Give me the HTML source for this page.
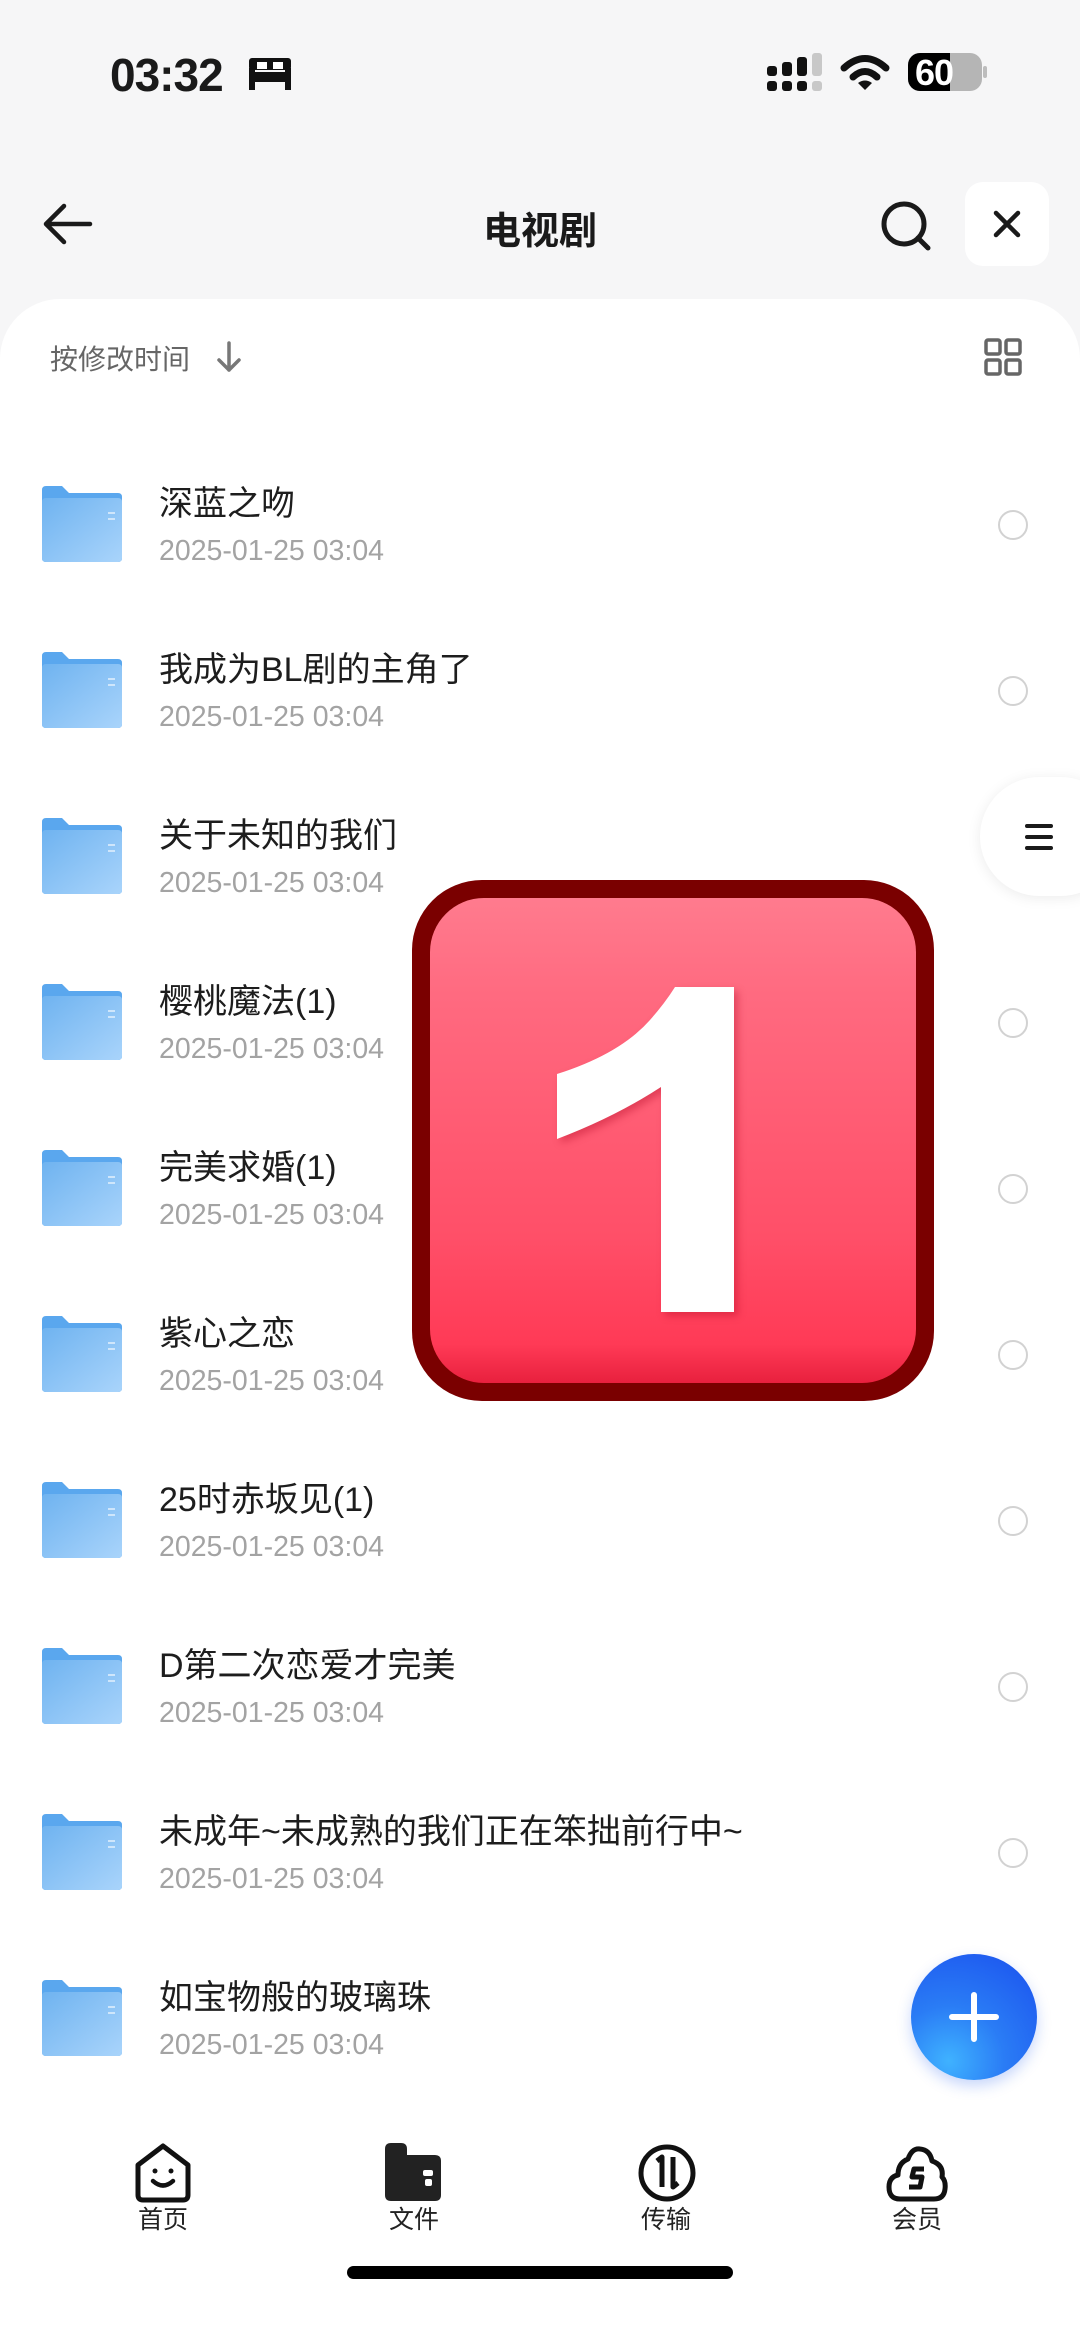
<!DOCTYPE html>
<html><head><meta charset="utf-8">
<style>
*{margin:0;padding:0;box-sizing:border-box}
body{width:1080px;height:2341px;background:#f6f6f7;font-family:"Liberation Sans","Noto Sans CJK SC",sans-serif;position:relative;overflow:hidden;color:#1a1a1a}
.abs{position:absolute}
.card{position:absolute;left:0;top:299px;width:1080px;height:2042px;background:#fff;border-radius:60px 60px 0 0}
.row{position:absolute;left:0;width:1080px;height:166px}
.fold{position:absolute;left:42px;width:80px;height:76px}
.t{position:absolute;left:159px;font-size:34px;color:#1d1d1d;white-space:nowrap}
.d{position:absolute;left:159px;font-size:28.5px;color:#a3a3a3;white-space:nowrap}
.r{position:absolute;left:998px;width:30px;height:30px;border:2.5px solid #d2d2d2;border-radius:50%}
.nav{position:absolute;top:2200px;font-size:25px;color:#222;width:100px;text-align:center}
</style></head><body>
<div class="abs" style="left:110px;top:48px;font-size:46px;font-weight:bold;letter-spacing:-1px">03:32</div>
<svg class="abs" style="left:247px;top:58px" width="46" height="32" viewBox="0 0 46 32"><rect x="2" y="0" width="42" height="12" rx="3" fill="#111"/><rect x="2" y="14" width="42" height="10" fill="#111"/><rect x="2" y="10" width="6" height="22" fill="#111"/><rect x="38" y="10" width="6" height="22" fill="#111"/><rect x="10" y="4" width="10" height="7" fill="#fff"/><rect x="26" y="4" width="10" height="7" fill="#fff"/></svg>
<svg class="abs" style="left:767px;top:53px" width="56" height="40" viewBox="0 0 56 40"><g fill="#111"><rect x="0" y="13" width="10" height="10" rx="3"/><rect x="0" y="28" width="10" height="10" rx="3"/><rect x="15" y="9" width="10" height="14" rx="3"/><rect x="15" y="28" width="10" height="10" rx="3"/><rect x="30" y="4" width="10" height="19" rx="3"/><rect x="30" y="28" width="10" height="10" rx="3"/></g><rect x="45" y="0" width="10" height="23" rx="3" fill="#c8c8c8"/><rect x="45" y="28" width="10" height="10" rx="3" fill="#c8c8c8"/></svg>
<svg class="abs" style="left:840px;top:55px" width="50" height="36" viewBox="0 0 50 36"><path d="M4 13 Q25 -6 46 13" stroke="#111" stroke-width="7" fill="none" stroke-linecap="round"/><path d="M13 22 Q25 11 37 22" stroke="#111" stroke-width="7" fill="none" stroke-linecap="round"/><path d="M18 28 L25 35 L32 28 Q25 23 18 28Z" fill="#111"/></svg>
<div class="abs" style="left:908px;top:53px;width:74px;height:38px;border-radius:12px;background:#b5b5b5;overflow:hidden"><div style="width:42px;height:38px;background:#000"></div></div>
<div class="abs" style="left:983px;top:66px;width:4px;height:12px;border-radius:2px;background:#bdbdbd"></div>
<div class="abs" style="left:915px;top:52px;font-size:36px;font-weight:bold;color:#fff;letter-spacing:-1px">60</div>

<svg class="abs" style="left:42px;top:202px" width="52" height="44" viewBox="0 0 52 44"><path d="M48 22 H6 M22 4 L4 22 L22 40" stroke="#1a1a1a" stroke-width="4.5" fill="none" stroke-linecap="round" stroke-linejoin="round"/></svg>
<div class="abs" style="left:0;width:1080px;top:200px;text-align:center;font-size:38px;font-weight:bold">电视剧</div>
<svg class="abs" style="left:878px;top:198px" width="56" height="56" viewBox="0 0 56 56"><circle cx="26" cy="26" r="20" stroke="#1a1a1a" stroke-width="5" fill="none"/><path d="M40 40 L50 50" stroke="#1a1a1a" stroke-width="5" stroke-linecap="round"/></svg>
<div class="abs" style="left:965px;top:182px;width:84px;height:84px;background:#fff;border-radius:18px"></div>
<svg class="abs" style="left:992px;top:209px" width="30" height="30" viewBox="0 0 30 30"><path d="M4 4 L26 26 M26 4 L4 26" stroke="#1a1a1a" stroke-width="4.5" stroke-linecap="round"/></svg>

<div class="card"></div>
<div class="abs" style="left:50px;top:338px;font-size:28px;color:#666">按修改时间</div>
<svg class="abs" style="left:216px;top:340px" width="26" height="34" viewBox="0 0 26 34"><path d="M13 3 V30 M3 20 L13 30 L23 20" stroke="#777" stroke-width="3.5" fill="none" stroke-linecap="round" stroke-linejoin="round"/></svg>
<svg class="abs" style="left:984px;top:338px" width="38" height="38" viewBox="0 0 38 38"><g stroke="#666" stroke-width="3.5" fill="none"><rect x="2" y="2" width="14" height="14" rx="2"/><rect x="22" y="2" width="14" height="14" rx="2"/><rect x="2" y="22" width="14" height="14" rx="2"/><rect x="22" y="22" width="14" height="14" rx="2"/></g></svg>

<div id="rows"></div>
<script>
var items=["深蓝之吻","我成为BL剧的主角了","关于未知的我们","樱桃魔法(1)","完美求婚(1)","紫心之恋","25时赤坂见(1)","D第二次恋爱才完美","未成年~未成熟的我们正在笨拙前行中~","如宝物般的玻璃珠"];
var h="";
for(var i=0;i<items.length;i++){var y=470+i*166;
h+='<div class="row" style="top:'+y+'px">'+
'<svg class="fold" style="top:16px" viewBox="0 0 80 76"><defs><linearGradient id="g'+i+'" x1="0" y1="0" x2="1" y2="1"><stop offset="0" stop-color="#6fb3f0"/><stop offset="1" stop-color="#a9d4fb"/></linearGradient></defs><path d="M0 4 Q0 0 4 0 H20 L27 7 H76 Q80 7 80 11 V72 Q80 76 76 76 H4 Q0 76 0 72Z" fill="#5aa7ee"/><path d="M0 16 Q0 12 4 12 H76 Q80 12 80 16 V72 Q80 76 76 76 H4 Q0 76 0 72Z" fill="url(#g'+i+')"/><rect x="66" y="26" width="7" height="2" fill="#cfe6fb"/><rect x="66" y="32" width="7" height="2" fill="#cfe6fb"/></svg>'+
'<div class="t" style="top:6px">'+items[i]+'</div>'+
'<div class="d" style="top:65px">2025-01-25 03:04</div>'+
(i<9?'<div class="r" style="top:40px"></div>':'')+'</div>';}
document.getElementById("rows").innerHTML=h;
</script>

<div class="abs" style="left:980px;top:777px;width:140px;height:119px;background:#fff;border-radius:60px;box-shadow:0 2px 14px rgba(0,0,0,0.08)"></div>
<svg class="abs" style="left:1024px;top:822px" width="30" height="30" viewBox="0 0 30 30"><g stroke="#1a1a1a" stroke-width="4" stroke-linecap="round"><path d="M3 4 H27 M3 15 H27 M3 26 H27"/></g></svg>

<div class="abs" style="left:412px;top:880px;width:522px;height:521px;border-radius:70px;background:#7a0000;padding:18px">
<div style="width:100%;height:100%;border-radius:54px;background:linear-gradient(#ff7b8e 0%,#ff6a80 20%,#ff4f68 70%,#ff3a56 92%,#e8203e 100%)"></div></div>
<svg class="abs" style="left:412px;top:880px" width="522" height="521" viewBox="412 880 522 521"><path d="M557 1074 Q620 1054 650 1020 Q665 1003 675 987 H734 V1312 H661 V1087 Q615 1117 557 1139 Z" fill="#fff" style="filter:drop-shadow(4px 4px 4px rgba(170,0,30,0.35))"/></svg>

<div class="abs" style="left:911px;top:1954px;width:126px;height:126px;border-radius:50%;background:radial-gradient(circle at 30% 85%,#3fb2ff 0%,#2a7cf5 40%,#1a4fee 100%);box-shadow:0 6px 14px rgba(30,90,240,0.25)"></div>
<svg class="abs" style="left:948px;top:1991px" width="52" height="52" viewBox="0 0 52 52"><path d="M26 4 V48 M4 26 H48" stroke="#fff" stroke-width="6" stroke-linecap="round"/></svg>

<svg class="abs" style="left:134px;top:2143px" width="58" height="60" viewBox="0 0 58 60"><path d="M4 22 L29 3 L54 22 V52 Q54 57 49 57 H9 Q4 57 4 52Z" stroke="#111" stroke-width="5" fill="none" stroke-linejoin="round"/><circle cx="21" cy="28" r="2.5" fill="#111"/><circle cx="37" cy="28" r="2.5" fill="#111"/><path d="M19 38 Q29 47 39 38" stroke="#111" stroke-width="4.5" fill="none" stroke-linecap="round"/></svg>
<svg class="abs" style="left:385px;top:2143px" width="58" height="60" viewBox="0 0 58 60"><path d="M0 6 Q0 0 6 0 H16 Q22 0 22 6 V12 H50 Q56 12 56 18 V52 Q56 58 50 58 H6 Q0 58 0 52Z" fill="#222"/><rect x="38" y="27" width="10" height="6" rx="2" fill="#fff"/><rect x="40" y="36" width="7" height="7" rx="2" fill="#fff"/></svg>
<svg class="abs" style="left:637px;top:2143px" width="60" height="60" viewBox="0 0 60 60"><circle cx="30" cy="30" r="26" stroke="#111" stroke-width="5" fill="none"/><path d="M20 18 L25 14 V44" stroke="#111" stroke-width="5" fill="none" stroke-linejoin="round"/><path d="M36 14 V44 L41 40" stroke="#111" stroke-width="5" fill="none" stroke-linejoin="round"/></svg>
<svg class="abs" style="left:886px;top:2145px" width="62" height="58" viewBox="0 0 62 58"><path d="M14 54 Q3 54 3 42 Q3 32 12 30 Q12 18 22 14 Q26 3 34 4 Q44 5 46 16 Q58 20 56 32 Q60 36 59 44 Q58 54 48 54Z" stroke="#111" stroke-width="5" fill="none" stroke-linejoin="round"/><path d="M38 24 H28 L26 32 H36 L34 42 H23" stroke="#111" stroke-width="5" fill="none" stroke-linejoin="round"/></svg>
<div class="nav" style="left:113px">首页</div>
<div class="nav" style="left:364px">文件</div>
<div class="nav" style="left:616px">传输</div>
<div class="nav" style="left:867px">会员</div>

<div class="abs" style="left:347px;top:2266px;width:386px;height:13px;border-radius:7px;background:#000"></div>
</body></html>
